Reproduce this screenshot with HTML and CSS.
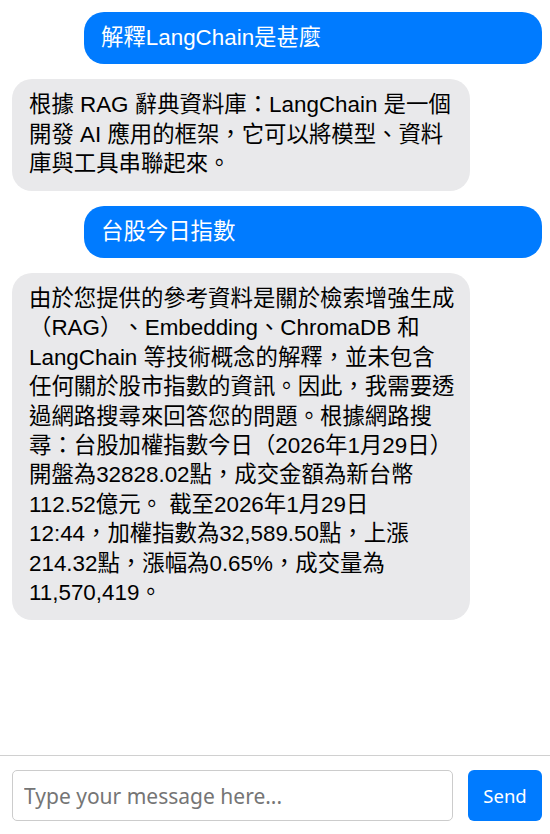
FILE: index.html
```html
<!DOCTYPE html>
<html lang="zh-Hant">
<head>
<meta charset="utf-8">
<title>Chat</title>
<link rel="stylesheet" href="styles.css">
</head>
<body>
<div class="app">
  <div class="messages">
    <div class="msg user">解釋LangChain是甚麼</div>
    <div class="msg bot">根據 RAG 辭典資料庫：LangChain 是一個開發 AI 應用的框架，它可以將模型、資料庫與工具串聯起來。</div>
    <div class="msg user">台股今日指數</div>
    <div class="msg bot">由於您提供的參考資料是關於檢索增強生成（RAG）、Embedding、ChromaDB 和 LangChain 等技術概念的解釋，並未包含任何關於股市指數的資訊。因此，我需要透過網路搜尋來回答您的問題。根據網路搜尋：台股加權指數今日（2026年1月29日）開盤為32828.02點，成交金額為新台幣112.52億元。 截至2026年1月29日<br>12:44，加權指數為32,589.50點，上漲214.32點，漲幅為0.65%，成交量為11,570,419。</div>
  </div>
  <form class="composer">
    <input class="composer-input" type="text" placeholder="Type your message here...">
    <button class="composer-send" type="button">Send</button>
  </form>
</div>
</body>
</html>
```
FILE: styles.css
```css
html, body {
  margin: 0;
  padding: 0;
  height: 100%;
  background: #ffffff;
}

.app {
  height: 834px;
  display: flex;
  flex-direction: column;
}

.messages {
  flex: 1;
  overflow: hidden;
  display: flex;
  flex-direction: column;
  gap: 15px;
  padding: 12px 8px 12px 12px;
}

.msg {
  width: 458px;
  box-sizing: border-box;
  padding: 11px 14px 12px 17px;
  border-radius: 20px;
  font-family: "Liberation Sans", "Noto Sans CJK TC", sans-serif;
  font-size: 22.4px;
  line-height: 29.4px;
  text-spacing-trim: space-all;
}

.user {
  align-self: flex-end;
  background: #007bff;
  color: #ffffff;
}

.bot {
  align-self: flex-start;
  background: #e9e9eb;
  color: #000000;
}

.composer {
  margin: 0;
  border-top: 1px solid #d0d0d0;
  padding: 14px 8px 13px 12px;
  display: flex;
  gap: 15px;
}

.composer-input {
  flex: 1;
  height: 51px;
  box-sizing: border-box;
  border: 1px solid #cccccc;
  border-radius: 5px;
  padding: 0 11px;
  font-family: "Noto Sans", sans-serif;
  font-size: 21px;
  color: #333333;
  outline: none;
}

.composer-input::placeholder {
  color: #757575;
}

.composer-send {
  width: 74px;
  height: 51px;
  border: none;
  border-radius: 6px;
  background: #007bff;
  color: #ffffff;
  font-family: "Noto Sans", sans-serif;
  font-size: 18.5px;
  padding: 0;
}
```
